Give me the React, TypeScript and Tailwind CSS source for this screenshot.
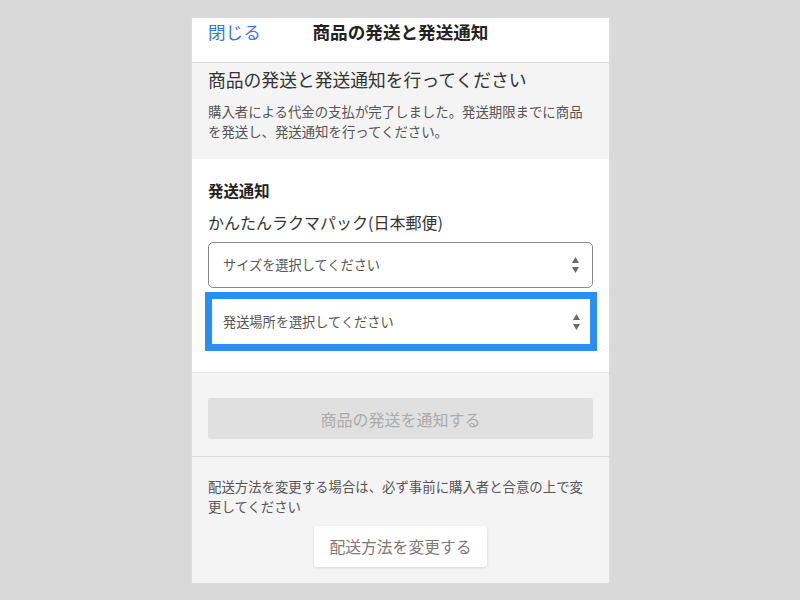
import React from "react";

const font = { fontFamily: '"Noto Sans CJK JP", "Noto Sans", sans-serif' };

function Arrows() {
  return (
    <svg width="9" height="18" viewBox="0 0 9 18" className="shrink-0">
      <path d="M4.5 1 L8 7 L1 7 Z" fill="#6b6b6b" />
      <path d="M4.5 17 L8 11 L1 11 Z" fill="#6b6b6b" />
    </svg>
  );
}

export default function App() {
  return (
    <div className="min-h-[600px] w-full bg-[#d9d9d9] pt-[17px]" style={font}>
      <div className="ml-[191px] w-[419px] border border-[#dcdcdc] bg-[#f4f4f4]">
        {/* header */}
        <div className="relative h-[45px] border-b border-[#dcdcdc] bg-white pt-[2px]">
          <div className="absolute left-[16px] top-[2px] text-[17.6px] leading-[24px] text-[#3b78e0]">閉じる</div>
          <div className="text-center text-[17.6px] font-bold leading-[24px] text-[#222]">商品の発送と発送通知</div>
        </div>
        {/* intro */}
        <div className="px-[16px] pb-[18px] pt-[3px]">
          <div className="text-[17.8px] leading-[26px] text-[#333]">商品の発送と発送通知を行ってください</div>
          <p className="mt-[9px] text-[13.4px] leading-[20px] text-[#555]">
            購入者による代金の支払が完了しました。発送期限までに商品を発送し、発送通知を行ってください。
          </p>
        </div>
        {/* form */}
        <div className="bg-white px-[16px] pb-[21px] pt-[20px]">
          <div className="text-[15.4px] font-bold leading-[22px] text-[#222]">発送通知</div>
          <div className="mt-[9px] text-[16px] leading-[24px] text-[#333]">かんたんラクマパック(日本郵便)</div>
          <div className="mt-[8px] flex h-[46px] items-center justify-between rounded-[5px] border border-[#8a8a8a] pl-[14px] pr-[12px]">
            <span className="text-[13.2px] text-[#555]">サイズを選択してください</span>
            <Arrows />
          </div>
          <div className="mt-[4px] -ml-[3px] -mr-[4px] flex h-[59px] items-center justify-between border-[7px] border-[#2a8ff2] bg-white pl-[11px] pr-[9px]">
            <span className="text-[13.2px] text-[#555]">発送場所を選択してください</span>
            <Arrows />
          </div>
        </div>
        {/* notify button */}
        <div className="border-t border-[#e6e6e6] px-[16px] pb-[17px] pt-[25px]">
          <div className="flex h-[41px] items-center justify-center rounded-[3px] bg-[#e0e0e0] text-[16px] text-[#ababab]">
            商品の発送を通知する
          </div>
        </div>
        {/* change shipping */}
        <div className="border-t border-[#dcdcdc] px-[16px] pb-[16px] pt-[19px]">
          <p className="text-[13.4px] leading-[20px] text-[#555]">
            配送方法を変更する場合は、必ず事前に購入者と合意の上で変更してください
          </p>
          <div className="mt-[10px] flex justify-center">
            <div className="flex h-[41px] items-center rounded-[3px] bg-white px-[15px] text-[15.8px] text-[#7a7a7a] shadow-[0_1px_3px_rgba(0,0,0,0.12)]">
              配送方法を変更する
            </div>
          </div>
        </div>
      </div>
    </div>
  );
}
